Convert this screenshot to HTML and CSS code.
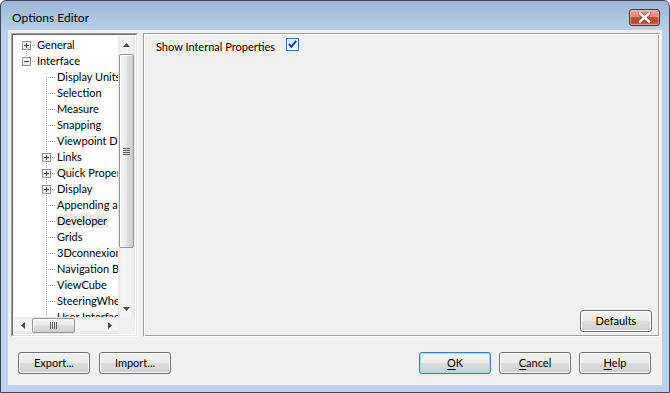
FILE: index.html
```html
<!DOCTYPE html>
<html>
<head>
<meta charset="utf-8">
<title>Options Editor</title>
<link rel="stylesheet" href="styles.css">
</head>
<body>
<div class="window">
  <div class="titlebar">
    <span class="title">Options Editor</span>
    <div class="close">
      <svg width="13" height="11" viewBox="0 0 13 11">
        <path d="M2 1.5 L11 9.5 M11 1.5 L2 9.5" stroke="#5a2320" stroke-width="4" stroke-linecap="round" fill="none" opacity="0.55"/>
        <path d="M2 1.5 L11 9.5 M11 1.5 L2 9.5" stroke="#ffffff" stroke-width="2.4" stroke-linecap="square" fill="none"/>
      </svg>
    </div>
  </div>
  <div class="client">
    <div class="main">
      <div class="treebox">
        <div class="treeframe">
          <div class="treeview">
            <div class="tree">
              <div class="row"><span class="n"><i class="vb"></i><i class="h"></i><b class="box plus"></b></span><span class="lbl">General</span></div>
              <div class="row"><span class="n"><i class="vt"></i><i class="h"></i><b class="box"></b></span><span class="lbl">Interface</span></div>
              <div class="row"><span class="ind"></span><span class="n"><i class="vb"></i><i class="h hc"></i></span><span class="lbl">Display Units</span></div>
              <div class="row"><span class="ind"></span><span class="n"><i class="v"></i><i class="h hc"></i></span><span class="lbl">Selection</span></div>
              <div class="row"><span class="ind"></span><span class="n"><i class="v"></i><i class="h hc"></i></span><span class="lbl">Measure</span></div>
              <div class="row"><span class="ind"></span><span class="n"><i class="v"></i><i class="h hc"></i></span><span class="lbl">Snapping</span></div>
              <div class="row"><span class="ind"></span><span class="n"><i class="v"></i><i class="h hc"></i></span><span class="lbl">Viewpoint Defaults</span></div>
              <div class="row"><span class="ind"></span><span class="n"><i class="v"></i><i class="h"></i><b class="box plus"></b></span><span class="lbl">Links</span></div>
              <div class="row"><span class="ind"></span><span class="n"><i class="v"></i><i class="h"></i><b class="box plus"></b></span><span class="lbl">Quick Properties</span></div>
              <div class="row"><span class="ind"></span><span class="n"><i class="v"></i><i class="h"></i><b class="box plus"></b></span><span class="lbl">Display</span></div>
              <div class="row"><span class="ind"></span><span class="n"><i class="v"></i><i class="h hc"></i></span><span class="lbl">Appending and Merging</span></div>
              <div class="row"><span class="ind"></span><span class="n"><i class="v"></i><i class="h hc"></i></span><span class="lbl sel">Developer</span></div>
              <div class="row"><span class="ind"></span><span class="n"><i class="v"></i><i class="h hc"></i></span><span class="lbl">Grids</span></div>
              <div class="row"><span class="ind"></span><span class="n"><i class="v"></i><i class="h hc"></i></span><span class="lbl">3Dconnexion</span></div>
              <div class="row"><span class="ind"></span><span class="n"><i class="v"></i><i class="h hc"></i></span><span class="lbl">Navigation Bar</span></div>
              <div class="row"><span class="ind"></span><span class="n"><i class="v"></i><i class="h hc"></i></span><span class="lbl">ViewCube</span></div>
              <div class="row"><span class="ind"></span><span class="n"><i class="v"></i><i class="h hc"></i></span><span class="lbl">SteeringWheels</span></div>
              <div class="row"><span class="ind"></span><span class="n"><i class="v"></i><i class="h hc"></i></span><span class="lbl">User Interface</span></div>
            </div>
            <div class="vscroll">
              <div class="sbtn">
                <svg width="7" height="4" viewBox="0 0 7 4"><path d="M3.5 0 L7 4 L0 4 Z" fill="#4a4a4a"/></svg>
              </div>
              <div class="vtrack">
                <div class="vthumb">
                  <svg width="7" height="7" viewBox="0 0 7 7">
                    <path d="M0 0.5h7M0 2.5h7M0 4.5h7M0 6.5h7" stroke="#5a5a5a" stroke-width="1"/>
                  </svg>
                </div>
              </div>
              <div class="sbtn">
                <svg width="7" height="4" viewBox="0 0 7 4"><path d="M0 0 L7 0 L3.5 4 Z" fill="#4a4a4a"/></svg>
              </div>
            </div>
          </div>
          <div class="hbar">
            <div class="hscroll">
              <div class="sbtn h">
                <svg width="4" height="7" viewBox="0 0 4 7"><path d="M0 3.5 L4 0 L4 7 Z" fill="#4a4a4a"/></svg>
              </div>
              <div class="htrack">
                <div class="hthumb">
                  <svg width="7" height="7" viewBox="0 0 7 7">
                    <path d="M0.5 0v7M2.5 0v7M4.5 0v7M6.5 0v7" stroke="#5a5a5a" stroke-width="1"/>
                  </svg>
                </div>
              </div>
              <div class="sbtn h">
                <svg width="4" height="7" viewBox="0 0 4 7"><path d="M0 0 L4 3.5 L0 7 Z" fill="#4a4a4a"/></svg>
              </div>
            </div>
            <div class="corner"></div>
          </div>
        </div>
      </div>
      <div class="panel">
        <div class="prop">
          <span class="prop-label">Show Internal Properties</span>
          <svg class="check" width="13" height="13" viewBox="0 0 13 13">
            <defs>
              <linearGradient id="cg" x1="0" y1="0" x2="1" y2="1">
                <stop offset="0" stop-color="#cfe2f4"/>
                <stop offset="1" stop-color="#f4f8fc"/>
              </linearGradient>
            </defs>
            <rect x="0.5" y="0.5" width="12" height="12" fill="#ffffff" stroke="#3a6ea5"/>
            <rect x="2" y="2" width="9" height="9" fill="url(#cg)"/>
            <path d="M3 6.2 L5.3 8.8 L10.2 2.8" stroke="#1e3a7a" stroke-width="1.9" fill="none"/>
          </svg>
        </div>
        <div class="panel-foot">
          <button class="btn">Defaults</button>
        </div>
      </div>
    </div>
    <div class="footer">
      <div class="group">
        <button class="btn">Export...</button>
        <button class="btn">Import...</button>
      </div>
      <div class="group">
        <button class="btn default"><u>O</u>K</button>
        <button class="btn"><u>C</u>ancel</button>
        <button class="btn"><u>H</u>elp</button>
      </div>
    </div>
  </div>
</div>
</body>
</html>
```
FILE: styles.css
```css
* { box-sizing: border-box; margin: 0; padding: 0; }
html, body { width: 670px; height: 393px; overflow: hidden; background: #ffffff; }
body {
  font-family: "Segoe UI", Lato, "Liberation Sans", sans-serif;
  font-size: 11px;
  color: #000;
}

.window {
  width: 670px;
  height: 393px;
  border: 1px solid #3b4a5a;
  border-radius: 6px 6px 0 0;
  background: linear-gradient(#9db6d4 0px, #b2c9e3 22px, #bad1ea 30px, #bbd2ea 100%);
  display: flex;
  flex-direction: column;
}

.titlebar {
  height: 29px;
  position: relative;
  padding: 9px 0 0 11px;
  flex: none;
}
.title { line-height: 16px; font-size: 12px; color: #000; }

.close {
  position: absolute;
  right: 9px;
  top: 8px;
  width: 31px;
  height: 17px;
  border: 1px solid #6e2a24;
  border-radius: 3px;
  background: linear-gradient(#e9a99c 0%, #d98a79 45%, #c2523d 50%, #b9442f 80%, #cf7a62 100%);
  box-shadow: inset 0 0 0 1px rgba(255, 220, 210, 0.45);
  display: flex;
  align-items: center;
  justify-content: center;
}

.client {
  margin: 0 7px;
  height: 355px;
  background: #f0f0f0;
  flex: none;
  display: flex;
  flex-direction: column;
}

.main {
  display: flex;
  gap: 5px;
  padding: 3px 2px 0 3px;
}

/* ---------- tree ---------- */
.treebox {
  width: 127px;
  height: 304px;
  border: 1px solid;
  border-color: #a0a0a0 #ffffff #ffffff #a0a0a0;
}
.treeframe {
  height: 100%;
  border: 1px solid;
  border-color: #696969 #e3e3e3 #e3e3e3 #696969;
  background: #ffffff;
  padding: 1px;
  display: flex;
  flex-direction: column;
}
.treeview {
  flex: 1;
  display: flex;
  min-height: 0;
}
.tree {
  flex: 1;
  overflow: hidden;
  padding: 1px 0 0 2px;
  white-space: nowrap;
}
.row {
  height: 16px;
  display: flex;
  align-items: center;
}
.ind { width: 20px; height: 16px; flex: none; }
.n {
  position: relative;
  width: 20px;
  height: 16px;
  flex: none;
}
.n i { position: absolute; display: block; }
.n .v, .n .vt, .n .vb {
  left: 10px;
  width: 1px;
  background: repeating-linear-gradient(to bottom, #a0a0a0 0 1px, transparent 1px 2px);
}
.n .v { top: 0; height: 16px; }
.n .vt { top: 0; height: 9px; }
.n .vb { top: 8px; height: 8px; }
.n .h {
  top: 8px;
  left: 12px;
  width: 8px;
  height: 1px;
  background: repeating-linear-gradient(to right, #a0a0a0 0 1px, transparent 1px 2px);
}
.box {
  position: absolute;
  left: 6px;
  top: 4px;
  width: 9px;
  height: 9px;
  border: 1px solid #919191;
  background: linear-gradient(#ffffff, #e4e4e4);
}
.box::before {
  content: "";
  position: absolute;
  left: 1px;
  top: 3px;
  width: 5px;
  height: 1px;
  background: #2b4478;
}
.box.plus::after {
  content: "";
  position: absolute;
  left: 3px;
  top: 1px;
  width: 1px;
  height: 5px;
  background: #2b4478;
}
.lbl {
  line-height: 14px;
  height: 14px;
  padding: 0 2px 0 1px;
}
.lbl.sel { background: #ececec; }

/* ---------- scrollbars ---------- */
.vscroll {
  width: 17px;
  flex: none;
  display: flex;
  flex-direction: column;
  background: linear-gradient(to right, #e6e6e6 0, #f3f3f3 3px, #f3f3f3 13px, #e6e6e6 17px);
}
.sbtn {
  height: 17px;
  flex: none;
  display: flex;
  align-items: center;
  justify-content: center;
}
.sbtn.h { width: 17px; height: 17px; }
.vtrack { flex: 1; padding: 1px 1px 0 1px; }
.vthumb {
  height: 194px;
  border: 1px solid #979797;
  border-radius: 2px;
  background: linear-gradient(to right, #f4f4f4 0%, #ebebeb 45%, #dcdcdc 55%, #cfcfcf 100%);
  box-shadow: inset 1px 1px 0 #ffffff;
  display: flex;
  align-items: center;
  justify-content: center;
}
.hbar {
  height: 17px;
  flex: none;
  display: flex;
}
.hscroll {
  flex: 1;
  display: flex;
  background: linear-gradient(#e6e6e6 0, #f3f3f3 3px, #f3f3f3 13px, #e6e6e6 17px);
}
.htrack { flex: 1; padding: 1px 0 1px 1px; }
.hthumb {
  width: 43px;
  height: 15px;
  border: 1px solid #979797;
  border-radius: 2px;
  background: linear-gradient(#f4f4f4 0%, #ebebeb 45%, #dcdcdc 55%, #cfcfcf 100%);
  box-shadow: inset 1px 1px 0 #ffffff;
  display: flex;
  align-items: center;
  justify-content: center;
}
.corner { width: 17px; flex: none; background: #f0f0f0; }

/* ---------- right panel ---------- */
.panel {
  width: 518px;
  height: 304px;
  border: 1px solid;
  border-color: #a0a0a0 #ffffff #ffffff #a0a0a0;
  box-shadow: inset 1px 1px 0 #ffffff, inset -1px -1px 0 #a0a0a0;
  display: flex;
  flex-direction: column;
  padding: 4px 7px 4px 12px;
}
.prop {
  display: flex;
  align-items: flex-start;
  height: 14px;
}
.prop-label { width: 130px; flex: none; line-height: 14px; padding-top: 2px; }
.check { display: block; flex: none; }
.panel-foot {
  margin-top: auto;
  display: flex;
  justify-content: flex-end;
}

/* ---------- buttons ---------- */
.btn {
  width: 72px;
  height: 22px;
  border: 1px solid #707070;
  border-radius: 3px;
  background: linear-gradient(#f2f2f2 0%, #ebebeb 50%, #dddddd 50%, #cfcfcf 100%);
  box-shadow: inset 0 0 0 1px #fcfcfc;
  font-family: inherit;
  font-size: 11px;
  color: #000;
  line-height: 18px;
  text-align: center;
}
.btn u { text-decoration: underline; text-underline-offset: 2px; }
.btn.default {
  border-color: #3c7fb1;
  box-shadow: inset 0 0 0 1px #a8dcf6;
}

.footer {
  margin-top: 15px;
  padding: 0 11px 0 10px;
  display: flex;
  justify-content: space-between;
}
.group { display: flex; gap: 8px; }
.group:first-child { gap: 9px; }
```
